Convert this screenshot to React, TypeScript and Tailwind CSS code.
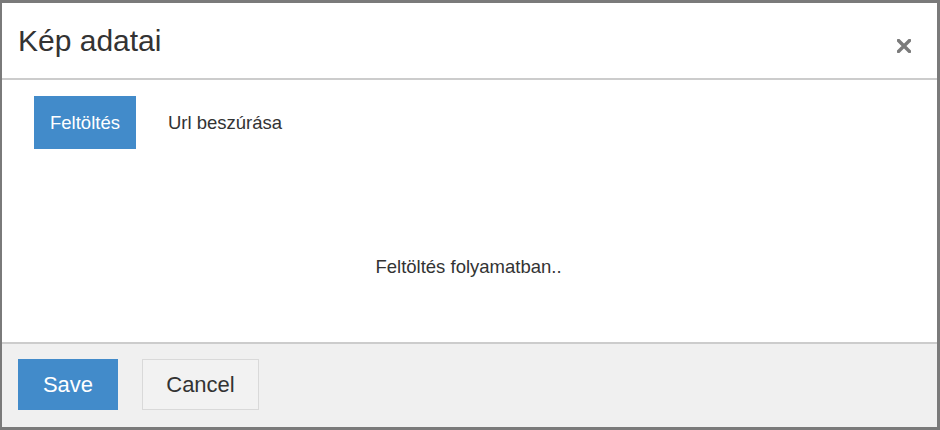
import { useState } from "react";

const tabs = [
  { id: "upload" as const, label: "Feltöltés" },
  { id: "url" as const, label: "Url beszúrása" },
];

export default function App() {
  const [active, setActive] = useState<"upload" | "url">("upload");

  return (
    <div className="w-[940px] h-[430px] bg-white font-['Liberation_Sans',Arial,sans-serif] text-[#333]">
      <div className="flex flex-col w-full h-full border-[#7a7a7a] border-t-[3px] border-b-[3px] border-l-2 border-r-[3px]">
        {/* Header */}
        <div className="flex items-start justify-between h-[77px] pt-[21px] pl-[16px] pr-[26px] border-b-2 border-[#cccccc]">
          <h4 className="text-[30px] leading-[34px] font-normal">Kép adatai</h4>
          <button className="mt-[15px]" aria-label="Close">
            <svg width="14" height="14" viewBox="0 0 14 14">
              <path d="M1.5 1.5 L12.5 12.5 M12.5 1.5 L1.5 12.5" stroke="#7b7b7b" strokeWidth="3.4" strokeLinecap="square" />
            </svg>
          </button>
        </div>

        {/* Body */}
        <div className="flex-1 pt-[16px] pl-[32px] pr-[32px]">
          <div className="flex items-center">
            {tabs.map((tab) => (
              <button
                key={tab.id}
                onClick={() => setActive(tab.id)}
                className={
                  active === tab.id
                    ? "h-[53px] px-[16px] text-[18.5px] bg-[#428bca] text-white"
                    : "h-[53px] px-[16px] text-[18.5px] text-[#333] ml-[16px]"
                }
              >
                {tab.label}
              </button>
            ))}
          </div>
          <p className="mt-[107px] text-center text-[18.5px] leading-[22px] pr-[2px]">Feltöltés folyamatban..</p>
        </div>

        {/* Footer */}
        <div className="h-[85px] border-t-2 border-[#cccccc] bg-[#f0f0f0] pt-[15px] pl-[16px] flex items-start gap-[24px]">
          <button className="w-[100px] h-[51px] bg-[#428bca] text-white text-[22px]">Save</button>
          <button className="w-[117px] h-[51px] bg-[#f2f2f2] border border-[#d9d9d9] text-[#333] text-[22px]">Cancel</button>
        </div>
      </div>
    </div>
  );
}
